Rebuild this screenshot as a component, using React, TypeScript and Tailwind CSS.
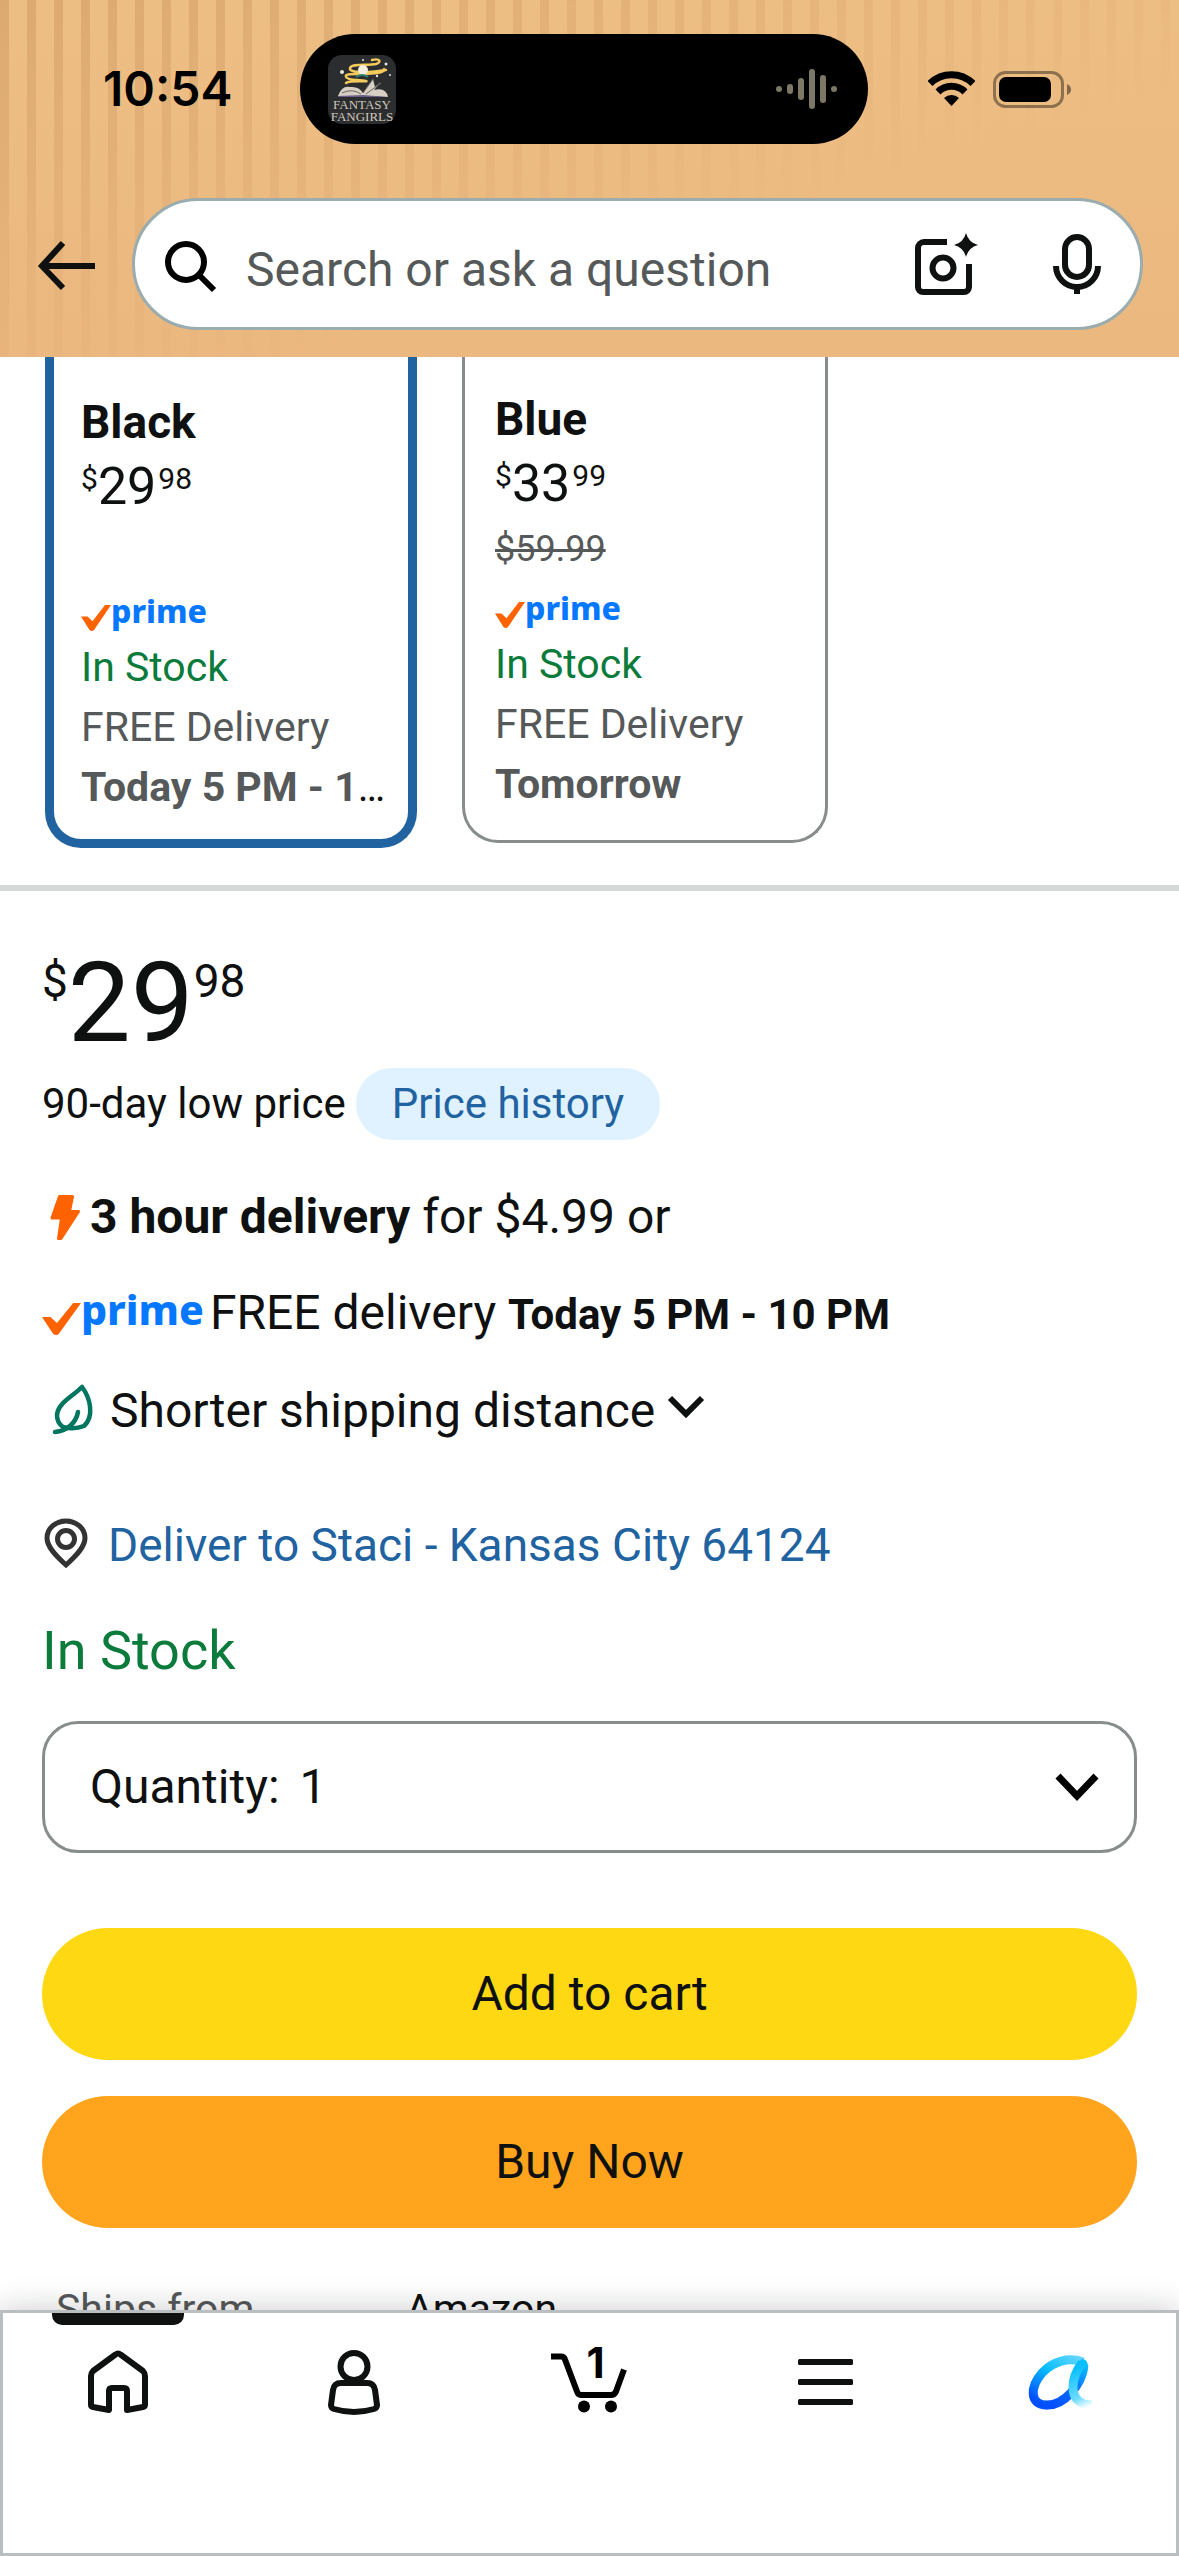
import { useState } from 'react';
import type { ReactNode } from 'react';
import clsx from 'clsx';

function AppIcon() {
    return (
        <svg width="68" height="69" viewBox="0 0 68 69" aria-label="Fantasy Fangirls">
            <rect width="68" height="69" rx="14" fill="#2b2d2f" />
            <g fill="none" stroke="#f3c95c" strokeLinecap="round">
                <path d="M44 5c8-2 10 2 4 4-8 2-24-1-26 4-1 4 8 4 14 4 10 0 20-2 22-2" strokeWidth="2.5" />
                <path d="M56 14c2 4-10 4-18 5-10 0-22-1-20 3s14 2 20 4c4 1-16-1-20 2" strokeWidth="2.5" />
            </g>
            <circle cx="35" cy="15" r="5" fill="#f6eee0" />
            <path d="M28 22q6-4 12 0" stroke="#2f7f73" strokeWidth="2" fill="none" />
            <path d="M10 41q4-11 12-9 9-1 13 6l10-14 2 8 6-5-7 8q12-3 14 7l-24-1z" fill="#d8cfc4" />
            <path d="M10 41l25-1 25 2H10z" fill="#6a5b8c" />
            <path d="M35 38l10-14M38 39l15-11M14 38q10-5 19 1" stroke="#6c655e" strokeWidth="1" fill="none" />
            <g fill="#e9e4dc">
                <circle cx="14" cy="17" r="2" />
                <circle cx="35" cy="5" r="1" />
                <circle cx="58" cy="9" r="1.5" />
                <circle cx="49" cy="21" r="1.2" />
                <circle cx="62" cy="20" r="1" />
            </g>
            <g className="font-['Liberation_Serif',serif]" fill="#cfc7bb" fontSize="13" textAnchor="middle">
                <text x="34" y="54">FANTASY</text>
                <text x="34" y="66">FANGIRLS</text>
            </g>
        </svg>
    );
}

function SoundWave() {
    return (
        <svg width="62" height="40" viewBox="0 0 62 40" fill="#7d7866">
            <circle cx="3" cy="20" r="3" />
            <rect x="11" y="15" width="6" height="10" rx="3" />
            <rect x="22" y="9" width="6" height="22" rx="3" />
            <rect x="33" y="0" width="6" height="40" rx="3" />
            <rect x="44" y="6" width="6" height="28" rx="3" />
            <circle cx="58" cy="20" r="3" />
        </svg>
    );
}

function StatusBar() {
    return (
        <div className="relative flex h-[110px] items-center">
            <p className="w-[300px] pl-[103px] font-['Inter',sans-serif] text-[48px] leading-[56px] font-semibold text-black">10:54</p>
            <div className="flex h-full w-[568px] items-center justify-between rounded-full bg-black pr-[30px] pl-7">
                <AppIcon />
                <SoundWave />
            </div>
            <div className="flex flex-1 items-center gap-[18px] pl-[60px]">
                <svg width="47" height="36" viewBox="0 0 47 36" fill="none" stroke="#000" strokeWidth="7">
                    <path d="M2 12.5a30.5 30.5 0 0 1 43 0" />
                    <path d="M10 21a19 19 0 0 1 27 0" />
                    <path d="M23.5 35l-7.500-8a11 11 0 0 1 15 0z" fill="#000" stroke="none" />
                </svg>
                <svg width="79" height="37" viewBox="0 0 79 37">
                    <rect x="1.500" y="1.500" width="68" height="34" rx="11" fill="none" stroke="#000" strokeOpacity=".4" strokeWidth="3" />
                    <rect x="6" y="6" width="52" height="25" rx="7" fill="#000" />
                    <path d="M74 13q4 2 4 5.500t-4 5.500z" fill="#000" fillOpacity=".45" />
                </svg>
            </div>
        </div>
    );
}

function SearchBar() {
    return (
        <div className="relative mt-[54px] flex items-center pr-9 pl-[36px]">
            <button aria-label="Back" className="w-24">
                <svg width="60" height="54" viewBox="0 0 60 54" fill="none" stroke="#0f1111" strokeWidth="6">
                    <path d="M59 29H6M27 6L6 29l21 22" />
                </svg>
            </button>
            <div className="flex h-[132px] flex-1 items-center rounded-full border-[3px] border-[#9aacae] bg-white pr-9 pl-[27px]">
                <svg width="60" height="60" viewBox="0 0 60 60" fill="none" stroke="#000" strokeWidth="6">
                    <circle cx="24" cy="28" r="18" />
                    <path d="M37 41l15 15" />
                </svg>
                <input
                    type="search"
                    aria-label="Search"
                    placeholder="Search or ask a question"
                    className="min-w-0 flex-1 bg-transparent pt-3 pl-6 text-[48px] leading-[60px] outline-none placeholder:text-[#565959]"
                />
                <button aria-label="Search by photo">
                    <svg width="70" height="70" viewBox="0 0 70 70" fill="none" stroke="#0f1111" strokeWidth="6">
                        <path d="M35 13H12a6 6 0 0 0-6 6v39a5 5 0 0 0 5 5h41a5 5 0 0 0 5-5V35" />
                        <circle cx="31" cy="39" r="10.500" />
                        <path d="M54 4q2.500 9.500 12 12-9.500 2.500-12 12-2.500-9.500-12-12 9.500-2.500 12-12z" fill="#0f1111" stroke="none" />
                    </svg>
                </button>
                <button aria-label="Search by voice" className="ml-[68px]">
                    <svg width="54" height="66" viewBox="0 0 54 66" fill="none" stroke="#0f1111" strokeWidth="6">
                        <rect x="15" y="6" width="24" height="40" rx="12" />
                        <path d="M6 35a21 21 0 0 0 42 0M27 56v7" />
                    </svg>
                </button>
            </div>
        </div>
    );
}

function Header() {
    return (
        <header className="relative shrink-0 bg-linear-to-b from-[#edbe84] to-[#ebb87f] pt-[34px] pb-[27px]">
            <div className="absolute inset-0 bg-[repeating-linear-gradient(90deg,#dba971_0,#dba971_9px,transparent_9px,transparent_27px)] mask-[linear-gradient(to_bottom_right,#000,transparent_62%)]" />
            <StatusBar />
            <SearchBar />
        </header>
    );
}

function PrimeLogo({ large = false }: { large?: boolean }) {
    return (
        <span className="flex items-end">
            <svg viewBox="0 0 30 24" fill="#ff6200" className={large ? 'h-8 w-[39px]' : 'h-[26px] w-[30px]'} preserveAspectRatio="none">
                <path d="M0 10.500h6.500L11.500 15 24 0h6L13 23q-2 2-4.500 0z" />
            </svg>
            <span
                className={clsx(
                    "font-['Noto_Sans',sans-serif] font-extrabold text-[#0578ff]",
                    large ? 'text-[41px] leading-[52px]' : 'text-[32px] leading-10'
                )}
            >
                prime
            </span>
        </span>
    );
}

type Variant = { name: string; dollars: string; cents: string; list?: string; arrives: string; selected?: boolean };

const variants: Variant[] = [
    { name: 'Black', dollars: '29', cents: '98', arrives: 'Today 5 PM - 10 PM', selected: true },
    { name: 'Blue', dollars: '33', cents: '99', list: '$59.99', arrives: 'Tomorrow' },
];

function VariantCard({ name, dollars, cents, list, arrives, selected }: Variant) {
    return (
        <button
            className={clsx(
                'rounded-b-[36px] text-left',
                selected
                    ? 'w-[372px] border-x-9 border-b-9 border-[#2162a1] pt-[39px] pr-2 pb-[22px] pl-[27px]'
                    : 'w-[366px] border-x-3 border-b-3 border-[#888c8c] pt-9 pr-2 pb-[26px] pl-[30px]'
            )}
        >
            <p className="text-[46px] leading-[52px] font-bold">{name}</p>
            <p className="mt-[9px] flex items-start text-[52px] leading-[60px]">
                <span className="mt-2 text-[30px] leading-7">$</span>
                {dollars}
                <span className="mt-2 ml-[2px] text-[30px] leading-7">{cents}</span>
            </p>
            <p className="mt-[13px] mb-[17px] h-11 text-[36px] leading-11 text-[#565959] line-through decoration-3">{list}</p>
            <PrimeLogo />
            <p className="mt-[6px] text-[41px] leading-[60px] text-[#0b7b3c]">In Stock</p>
            <p className="text-[41px] leading-[60px] text-[#565959]">FREE Delivery</p>
            <p className="truncate text-[41px] leading-[60px]">
                <span className="font-bold text-[#565959]">{arrives}</span>
            </p>
        </button>
    );
}

function DeliveryInfo() {
    return (
        <div className="mt-[47px] flex flex-col gap-9 text-[48px] leading-[60px]">
            <div className="flex items-center gap-2 pl-2">
                <svg width="32" height="50" viewBox="0 0 32 50" fill="#ff6200" stroke="#ff6200" strokeWidth="3" strokeLinejoin="round">
                    <path d="M9.500 4.500h13l-3 15h9L11 46.500H8.500L11.500 26H2z" />
                </svg>
                <p>
                    <b>3 hour delivery</b> for $4.99 or
                </p>
            </div>
            <div className="flex items-start gap-[6px]">
                <PrimeLogo large />
                <p>
                    FREE delivery <b className="text-[42px]">Today 5 PM - 10 PM</b>
                </p>
            </div>
            <button className="flex items-center pl-2 text-left">
                <svg width="46" height="54" viewBox="0 0 46 54" fill="none" stroke="#007560" strokeWidth="4.500" strokeLinecap="round" strokeLinejoin="round" className="mb-[3px]">
                    <path d="M32 4C22 14 8 20 7 32q0 8 6 12 11 3 21-1c10-9 7-27-2-39z" />
                    <path d="M28 29C26 40 17 48 5 49" />
                </svg>
                <span className="ml-[14px]">Shorter shipping distance</span>
                <svg width="38" height="26" viewBox="0 0 38 26" fill="none" stroke="#0f1111" strokeWidth="6" className="mb-2 ml-3">
                    <path d="M3 4l16 16L35 4" />
                </svg>
            </button>
        </div>
    );
}

function QuantityPicker() {
    const [quantity, setQuantity] = useState('1');

    return (
        <div className="mt-[38px] flex h-[132px] items-center rounded-[36px] border-3 border-[#888c8c] pr-[35px] pl-[45px] text-[48px] leading-[60px]">
            <label htmlFor="quantity">Quantity:</label>
            <select
                id="quantity"
                value={quantity}
                onChange={(e) => setQuantity(e.target.value)}
                className="ml-5 flex-1 appearance-none bg-transparent outline-none"
            >
                <option>1</option>
                <option>2</option>
                <option>3</option>
            </select>
            <svg width="44" height="30" viewBox="0 0 44 30" fill="none" stroke="#000" strokeWidth="7" className="pointer-events-none">
                <path d="M3 4l19 20L41 4" />
            </svg>
        </div>
    );
}

function NavItem({ label, children }: { label: string; children: ReactNode }) {
    return (
        <a href="#" aria-label={label} className="relative flex flex-1 justify-center pt-[37px]">
            {children}
        </a>
    );
}

function BottomNav() {
    return (
        <nav className="relative z-10 flex h-[246px] shrink-0 items-start bg-white shadow-[0_0_30px_rgba(15,17,17,0.22)] inset-ring-3 inset-ring-[#b9bec1]">
            <NavItem label="Home">
                <span className="absolute top-[3px] h-3 w-[132px] rounded-b-[10px] bg-[#0f1111]" />
                <svg width="66" height="70" viewBox="0 0 66 70" fill="none" stroke="#0f1111" strokeWidth="6" strokeLinejoin="round">
                    <path d="M30.500 7.500L8 24q-2 2-2 5v29q0 1.500 2 2l16 3V44q0-3 3-3h12q3 0 3 3v19l16-3q2-.5 2-2V29q0-3-2-5L35.500 7.500q-2.500-2-5 0z" />
                </svg>
            </NavItem>
            <NavItem label="Account">
                <svg width="60" height="70" viewBox="0 0 60 70" fill="none" stroke="#0f1111" strokeWidth="6" strokeLinejoin="round">
                    <circle cx="30" cy="19.500" r="13.500" />
                    <path d="M17 36h26q7 0 8 7l2 15q0 3-3 4-20 6-40 0-3-1-3-4l2-15q1-7 8-7z" />
                </svg>
            </NavItem>
            <NavItem label="Cart, 1 item">
                <svg width="81" height="70" viewBox="0 0 81 70" fill="none" stroke="#000" strokeWidth="6" strokeLinejoin="round">
                    <path d="M2 9.500h10q3 0 4 3l12 32q1 3.500 4 3.500h30q3.500 0 5-3.500l8-22" />
                    <circle cx="35" cy="59.500" r="6" fill="#000" stroke="none" />
                    <circle cx="62" cy="59.500" r="6" fill="#000" stroke="none" />
                </svg>
                <span className="absolute top-[31px] pl-3 font-['Inter',sans-serif] text-[42px] leading-[44px] font-bold text-black">1</span>
            </NavItem>
            <NavItem label="Menu">
                <svg width="55" height="70" viewBox="0 0 55 70" fill="#0f1111">
                    <rect y="12" width="55" height="6" rx="1.500" />
                    <rect y="32" width="55" height="6" rx="1.500" />
                    <rect y="52" width="55" height="6" rx="1.500" />
                </svg>
            </NavItem>
            <NavItem label="Assistant">
                <svg width="72" height="70" viewBox="0 0 72 70" fill="none" strokeWidth="9">
                    <defs>
                        <linearGradient id="loop" x1="50" y1="8" x2="20" y2="58" gradientUnits="userSpaceOnUse">
                            <stop offset="0" stopColor="#63d6ff" />
                            <stop offset=".45" stopColor="#08bfff" />
                            <stop offset="1" stopColor="#0450ff" />
                        </linearGradient>
                        <linearGradient id="rise" x1="26" y1="58" x2="58" y2="16" gradientUnits="userSpaceOnUse">
                            <stop offset="0" stopColor="#0450ff" />
                            <stop offset=".5" stopColor="#0a6bff" />
                            <stop offset="1" stopColor="#08bfff" />
                        </linearGradient>
                        <linearGradient id="tail" x1="52" y1="20" x2="68" y2="58" gradientUnits="userSpaceOnUse">
                            <stop offset="0" stopColor="#08bfff" />
                            <stop offset=".7" stopColor="#6bdcff" />
                            <stop offset="1" stopColor="#6bdcff" stopOpacity="0" />
                        </linearGradient>
                    </defs>
                    <path d="M58 15C44 10 28 14 17 26 5 40 4 58 22 58" stroke="url(#loop)" />
                    <path d="M21 58c18 1 36-20 38-40" stroke="url(#rise)" />
                    <path d="M50 22q3-10 8-10 5 1 5 8-1 10-7 18-8-4-6-16z" fill="url(#rise)" />
                    <path d="M57 16c-6 8-9 16-9 24 0 12 7 18 19 18" stroke="url(#tail)" />
                </svg>
            </NavItem>
        </nav>
    );
}

export default function App() {
    return (
        <div className="flex h-screen flex-col bg-white font-['Roboto',sans-serif] text-[#0f1111]">
            <Header />
            <main className="min-h-0 flex-1 overflow-hidden">
                <div className="flex items-start gap-[45px] border-b-6 border-[#d5d9d9] pb-[37px] pl-[45px]">
                    {variants.map((v) => (
                        <VariantCard key={v.name} {...v} />
                    ))}
                </div>
                <section className="px-[42px] pt-14">
                    <p className="flex items-start text-[112px] leading-[112px]">
                        <span className="mt-[11px] text-[46px] leading-[46px]">$</span>
                        {'29'}
                        <span className="mt-[11px] text-[46px] leading-[46px]">98</span>
                    </p>
                    <div className="mt-[9px] flex h-[72px] items-center gap-[10px] text-[42px] leading-[72px]">
                        <p>90-day low price</p>
                        <button className="h-full rounded-full bg-[#e0f2ff] px-9 text-[#2162a1]">Price history</button>
                    </div>
                    <DeliveryInfo />
                    <a href="#" className="mt-[74px] flex items-center gap-5 text-[46px] leading-[60px] text-[#2162a1]">
                        <svg width="46" height="54" viewBox="0 0 46 54" fill="none" stroke="#333" strokeWidth="5">
                            <path d="M24 47C14 38 5 29 5 20a19 17 0 0 1 38 0c0 9-9 18-19 27z" />
                            <circle cx="24" cy="21" r="8.500" />
                        </svg>
                        Deliver to Staci - Kansas City 64124
                    </a>
                    <p className="mt-11 text-[54px] leading-16 text-[#0b7b3c]">In Stock</p>
                    <QuantityPicker />
                    <div className="mt-[75px] flex flex-col gap-9 text-[48px]">
                        <button className="h-[132px] rounded-full bg-[#ffd814]">Add to cart</button>
                        <button className="h-[132px] rounded-full bg-[#ffa41c]">Buy Now</button>
                    </div>
                    <dl className="mt-[53px] flex pl-[14px] text-[41px] leading-14">
                        <dt className="w-[350px] text-[#565959]">Ships from</dt>
                        <dd>Amazon</dd>
                    </dl>
                </section>
            </main>
            <BottomNav />
        </div>
    );
}
